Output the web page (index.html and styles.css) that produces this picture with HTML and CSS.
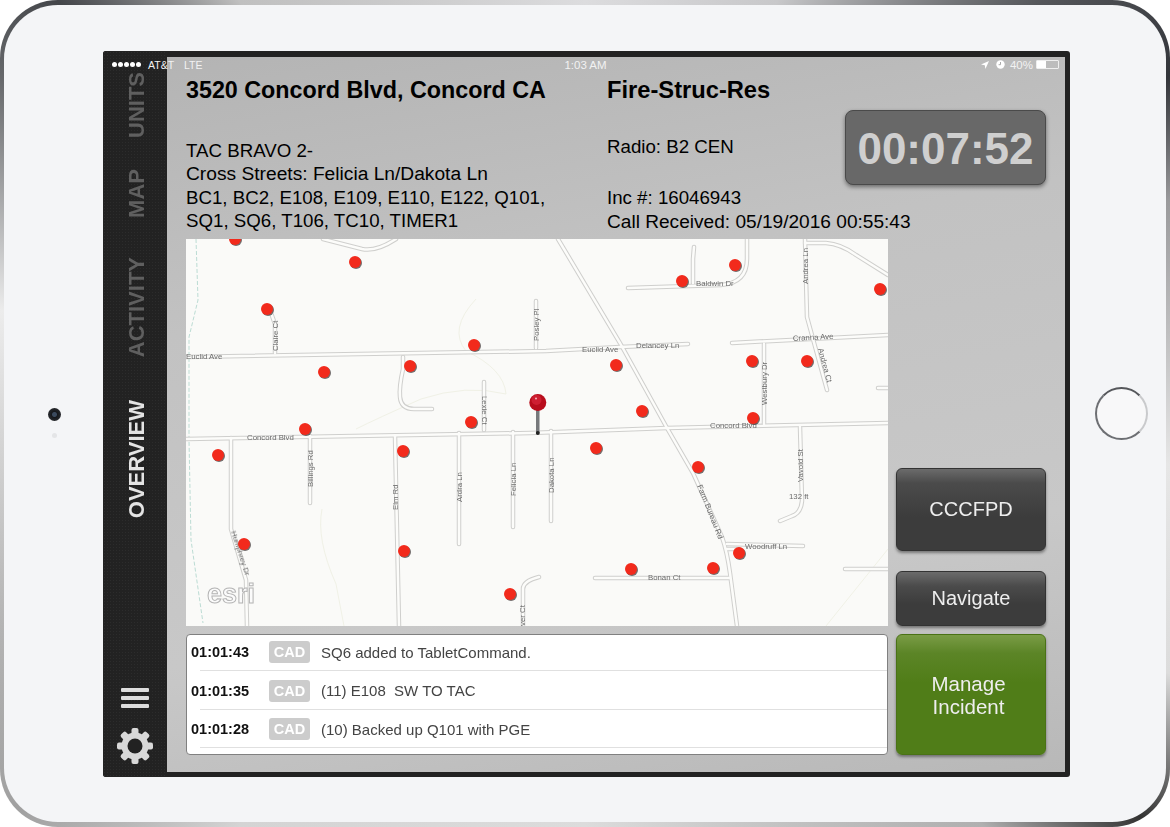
FILE: index.html
```html
<!DOCTYPE html>
<html lang="en">
<head>
  <meta charset="UTF-8">
  <title>Tablet Command</title>
  <meta name="viewport" content="width=device-width, initial-scale=1.0">
  <link rel="stylesheet" href="styles.css">
</head>
<body>
  <div class="device">
    <div class="bezel">
      <div class="bezel-left">
        <span class="camera"></span>
        <span class="sensor"></span>
      </div>

      <div class="screen">
        <nav class="sidenav">
          <a class="nav-item nav-units">UNITS</a>
          <a class="nav-item nav-map">MAP</a>
          <a class="nav-item nav-activity">ACTIVITY</a>
          <a class="nav-item nav-overview active">OVERVIEW</a>
          <div class="menu-icon"><span></span><span></span><span></span></div>
          <svg class="gear-icon" viewBox="0 0 36 36" width="36" height="36">
            <g fill="#d8d8d8">
              <rect x="14.5" y="0" width="7" height="36" rx="2"/>
              <rect x="14.5" y="0" width="7" height="36" rx="2" transform="rotate(45 18 18)"/>
              <rect x="14.5" y="0" width="7" height="36" rx="2" transform="rotate(90 18 18)"/>
              <rect x="14.5" y="0" width="7" height="36" rx="2" transform="rotate(135 18 18)"/>
            </g>
            <circle cx="18" cy="18" r="10.5" fill="none" stroke="#d8d8d8" stroke-width="6"/>
            <circle cx="18" cy="18" r="7.5" fill="#222"/>
          </svg>
        </nav>

        <main class="main">
          <div class="statusbar">
            <div class="status-left">
              <span class="signal"><i></i><i></i><i></i><i></i><i></i></span>
              <span>AT&amp;T</span>
              <span class="lte">LTE</span>
            </div>
            <div class="status-time">1:03 AM</div>
            <div class="status-right">
              <svg viewBox="0 0 8 8" width="8" height="8"><path d="M8 0 L0 3.6 L3.8 4.2 L4.4 8 Z" fill="#fff"/></svg>
              <svg class="alarm" viewBox="0 0 9 9" width="9" height="9"><circle cx="4.5" cy="4.5" r="4.2" fill="#fff"/><path d="M4.5 2 V4.7 H2.6" fill="none" stroke="#aaa" stroke-width="1"/></svg>
              <span class="pct">40%</span>
              <span class="battery"><span class="battery-level"></span></span>
            </div>
          </div>

          <header class="head">
            <div class="head-left">
              <h1>3520 Concord Blvd, Concord CA</h1>
              <p class="info">TAC BRAVO 2-<br><span class="cross">Cross Streets: Felicia Ln/Dakota Ln</span><br>BC1, BC2, E108, E109, E110, E122, Q101,<br>SQ1, SQ6, T106, TC10, TIMER1</p>
            </div>
            <div class="head-mid">
              <h1>Fire-Struc-Res</h1>
              <p class="radio">Radio: B2 CEN</p>
              <p class="inc">Inc #: 16046943<br><span class="received">Call Received: 05/19/2016 00:55:43</span></p>
            </div>
            <div class="timer">00:07:52</div>
          </header>

          <div class="body">
            <div class="map">
              <svg viewBox="0 0 702 387" width="702" height="387">
                <defs>
                  <g id="roads">
                    <path d="M0 118 L360 112 L434 108 L502 105"/>
                    <path d="M0 200 L344 194 L481 189 L702 184"/>
                    <path d="M372 0 L434 104 L481 189 L507 234 L536 298 Q541 312 544 334 L551 387"/>
                    <path d="M89 114 V85 L85 74"/>
                    <path d="M350 109 V62"/>
                    <path d="M217 118 V130 Q213 148 214 158 Q215 170 228 170 H246"/>
                    <path d="M298 191 V143"/>
                    <path d="M45 199 V290 L60 341 L61 387"/>
                    <path d="M124 197 V264"/>
                    <path d="M209 197 L213 387"/>
                    <path d="M273 194 V305"/>
                    <path d="M327 193 V288"/>
                    <path d="M365 192 V282"/>
                    <path d="M353 338 Q337 342 337 350 V387"/>
                    <path d="M137 0 L176 10 Q190 13 210 0"/>
                    <path d="M442 49 L535 46 Q561 44 561 20 V0"/>
                    <path d="M507 44 V20 L508 8"/>
                    <path d="M619 0 L621 78 L641 151"/>
                    <path d="M619 4 H640 Q655 5 670 16 L702 36"/>
                    <path d="M546 104 L702 96"/>
                    <path d="M578 105 V185"/>
                    <path d="M614 188 L616 262 Q615 274 606 277 L594 282"/>
                    <path d="M541 305 L617 307"/>
                    <path d="M541 310 H553"/>
                    <path d="M409 339 H543"/>
                    <path d="M659 330 H702"/>
                    <path d="M692 149 H702"/>
                  </g>
                </defs>

                <path class="water" d="M10 0 L12 61 L3 98 L3 201 L5 301 L17 384"/>
                <path class="contour" d="M290 60 Q262 90 280 112 Q318 130 320 155 Q280 145 235 160 Q190 180 170 190"/>
                <path class="contour" d="M136 270 Q130 300 150 345 L158 387"/>
                <path class="contour" d="M640 387 L702 310"/>

                <use href="#roads" class="road-case"/>
                <use href="#roads" class="road-fill"/>

                <g class="labels">
                  <text x="0" y="120">Euclid Ave</text>
                  <text x="61" y="201">Concord Blvd</text>
                  <text x="396" y="113">Euclid Ave</text>
                  <text x="450" y="109">Delancey Ln</text>
                  <text x="524" y="189">Concord Blvd</text>
                  <text x="510" y="47">Baldwin Dr</text>
                  <text x="607" y="102" transform="rotate(-3 607 102)">Cranna Ave</text>
                  <text x="559" y="310">Woodruff Ln</text>
                  <text x="462" y="341">Bonan Ct</text>
                  <text x="603" y="260" class="ft">132 ft</text>
                  <text transform="translate(92 112) rotate(-90)">Claire Ct</text>
                  <text transform="translate(353 102) rotate(-90)">Posley Pl</text>
                  <text transform="translate(127 248) rotate(-90)">Billings Rd</text>
                  <text transform="translate(212 271) rotate(-90)">Elm Rd</text>
                  <text transform="translate(276 263) rotate(-90)">Ardra Ln</text>
                  <text transform="translate(330 257) rotate(-90)">Felicia Ln</text>
                  <text transform="translate(368 254) rotate(-90)">Dakota Ln</text>
                  <text transform="translate(581 166) rotate(-90)">Westbury Dr</text>
                  <text transform="translate(617 243) rotate(-90)">Vavoid St</text>
                  <text transform="translate(622 45) rotate(-90)">Andrea Ln</text>
                  <text transform="translate(296 157) rotate(90)">Lexie Ct</text>
                  <text transform="translate(632 110) rotate(75)">Andrea Ct</text>
                  <text transform="translate(45 293) rotate(72)">Humphrey Dr</text>
                  <text transform="translate(511 247) rotate(68)">Farm Bureau Rd</text>
                  <text transform="translate(339 387) rotate(-90)">ver Ct</text>
                </g>

                <text class="esri" x="21" y="364">esri</text>

                <g class="dots">
                  <circle cx="49" cy="0" r="6"/>
                  <circle cx="169" cy="23" r="6"/>
                  <circle cx="81" cy="70" r="6"/>
                  <circle cx="288" cy="106" r="6"/>
                  <circle cx="224" cy="127" r="6"/>
                  <circle cx="138" cy="133" r="6"/>
                  <circle cx="285" cy="183" r="6"/>
                  <circle cx="119" cy="190" r="6"/>
                  <circle cx="32" cy="216" r="6"/>
                  <circle cx="217" cy="212" r="6"/>
                  <circle cx="58" cy="305" r="6"/>
                  <circle cx="218" cy="312" r="6"/>
                  <circle cx="324" cy="355" r="6"/>
                  <circle cx="549" cy="26" r="6"/>
                  <circle cx="496" cy="42" r="6"/>
                  <circle cx="694" cy="50" r="6"/>
                  <circle cx="430" cy="126" r="6"/>
                  <circle cx="566" cy="122" r="6"/>
                  <circle cx="621" cy="122" r="6"/>
                  <circle cx="456" cy="172" r="6"/>
                  <circle cx="567" cy="179" r="6"/>
                  <circle cx="410" cy="209" r="6"/>
                  <circle cx="512" cy="228" r="6"/>
                  <circle cx="553" cy="314" r="6"/>
                  <circle cx="445" cy="330" r="6"/>
                  <circle cx="527" cy="329" r="6"/>
                </g>

                <!-- incident pin -->
                <rect x="350" y="170" width="3.5" height="24" fill="#77797c"/>
                <circle cx="351.8" cy="194" r="2" fill="#222"/>
                <circle cx="351.8" cy="163.5" r="8.5" fill="#b80d1c"/>
                <circle cx="350.5" cy="161" r="5" fill="#d7263a" opacity="0.7"/>
                <circle cx="350" cy="159.5" r="1" fill="#f5b6bd"/>
              </svg>
            </div>

            <div class="btn-stack">
              <button class="btn btn-cccfpd">CCCFPD</button>
              <button class="btn btn-navigate">Navigate</button>
            </div>

            <div class="log">
              <div class="log-row">
                <span class="log-time">01:01:43</span>
                <span class="log-tag">CAD</span>
                <span class="log-msg">SQ6 added to TabletCommand.</span>
              </div>
              <div class="log-row">
                <span class="log-time">01:01:35</span>
                <span class="log-tag">CAD</span>
                <span class="log-msg">(11) E108&nbsp; SW TO TAC</span>
              </div>
              <div class="log-row">
                <span class="log-time">01:01:28</span>
                <span class="log-tag">CAD</span>
                <span class="log-msg">(10) Backed up Q101 with PGE</span>
              </div>
            </div>

            <button class="btn btn-manage">Manage<br>Incident</button>
          </div>
        </main>
      </div>

      <div class="bezel-right">
        <span class="home-button"></span>
      </div>
    </div>
  </div>
</body>
</html>
```

FILE: styles.css
```css
* {
  box-sizing: border-box;
}

body {
  margin: 0;
  background-color: #ffffff;
  font-family: "Liberation Sans", Arial, sans-serif;
  overflow: hidden;
}

.device {
  width: 1170px;
  height: 827px;
  padding: 5px 4px;
  border-radius: 58px;
  background: conic-gradient(#dcdcde 0deg, #c8c8ca 25deg, #54565a 48deg, #33353a 60deg, #9a9a9c 70deg, #e6e6e6 95deg, #dcdcdc 114deg, #333 126deg, #b0b0b0 136deg, #dcdcdc 180deg, #d4d4d4 220deg, #a0a0a0 235deg, #b4b4b4 250deg, #ececec 280deg, #66686b 300deg, #44464a 308deg, #c0c0c0 320deg, #dcdcde 360deg);
}

.bezel {
  display: flex;
  align-items: center;
  height: 100%;
  border-radius: 54px;
  background-color: #f4f5f7;
}

.bezel-left {
  width: 99px;
  display: flex;
  flex-direction: column;
  align-items: center;
  padding-top: 18px;
  padding-left: 1px;
}

.camera {
  width: 13px;
  height: 13px;
  border-radius: 50%;
  background: radial-gradient(circle, #3b4a5e 0 2px, #16181c 3px, #34363a 100%);
}

.sensor {
  width: 5px;
  height: 5px;
  margin-top: 12px;
  border-radius: 50%;
  background-color: #e4e5e7;
}

.bezel-right {
  width: 96px;
  display: flex;
  justify-content: center;
}

.home-button {
  width: 53px;
  height: 53px;
  margin-left: 6px;
  border-radius: 50%;
  border: 2px solid #6d6f73;
  border-right-color: #c9cacc;
  border-top-color: #55575b;
  background-color: #f8f8f9;
}

.screen {
  width: 967px;
  height: 726px;
  display: flex;
  border-radius: 3px;
  background-color: #222222;
  flex-shrink: 0;
  overflow: hidden;
}

/* side navigation */
.sidenav {
  width: 64px;
  display: flex;
  flex-direction: column;
  align-items: center;
  padding-top: 21px;
  background-color: #222222;
  background-image: radial-gradient(#2c2c2c 1px, transparent 1px);
  background-size: 3px 3px;
}

.nav-item {
  writing-mode: vertical-rl;
  transform: rotate(180deg);
  font-size: 22px;
  line-height: 20px;
  font-weight: bold;
  color: #5f5f5f;
  margin-left: 4px;
}

.nav-map {
  margin-top: 31px;
}

.nav-activity {
  margin-top: 40px;
}

.nav-overview {
  margin-top: 42px;
}

.nav-item.active {
  color: #e4e4e4;
}

.menu-icon {
  display: flex;
  flex-direction: column;
  gap: 4px;
  margin-top: auto;
}

.menu-icon span {
  display: block;
  width: 28px;
  height: 4px;
  border-radius: 1px;
  background-color: #dddddd;
}

.gear-icon {
  margin-top: 20px;
  margin-bottom: 13px;
}

/* main panel */
.main {
  position: relative;
  width: 898px;
  height: 715px;
  margin-top: 6px;
  padding-left: 19px;
  background: linear-gradient(170deg, #b4b4b4 0%, #c2c2c2 32%, #c8c8c8 70%, #b8b8b8 100%);
}

.statusbar {
  position: absolute;
  top: 1px;
  left: -55px;
  right: 6px;
  height: 14px;
  display: flex;
  justify-content: space-between;
  align-items: center;
  font-size: 10.5px;
  color: #f2f2f2;
}

.status-left,
.status-right {
  display: flex;
  align-items: center;
  width: 200px;
}

.status-right {
  justify-content: flex-end;
}

.status-time {
  font-size: 11.5px;
}

.signal {
  display: flex;
  gap: 1px;
  margin-right: 7px;
}

.signal i {
  width: 5px;
  height: 5px;
  border-radius: 50%;
  background-color: #ffffff;
}

.lte {
  margin-left: 10px;
}

.alarm {
  margin-left: 7px;
}

.pct {
  margin-left: 5px;
  font-size: 11.5px;
}

.battery {
  width: 23px;
  height: 9px;
  margin-left: 3px;
  border: 1px solid #eeeeee;
  border-radius: 1px;
}

.battery-level {
  display: block;
  width: 9px;
  height: 100%;
  background-color: #ffffff;
}

.head {
  display: flex;
  height: 182px;
  color: #000000;
}

.head h1 {
  margin: 0;
  padding-top: 19px;
  font-size: 23.3px;
  line-height: 28px;
  font-weight: bold;
}

.head p {
  margin: 0;
  font-size: 18.7px;
  line-height: 23.5px;
  white-space: nowrap;
}

.head-left {
  width: 421px;
}

.info {
  padding-top: 35px;
}

.cross {
  font-size: 19.2px;
}

.head-mid {
  width: 238px;
}

.head-mid h1 {
  font-size: 23.7px;
}

.radio {
  padding-top: 31px;
}

.inc {
  padding-top: 28px;
}

.received {
  font-size: 19.1px;
}

.timer {
  width: 201px;
  height: 75px;
  margin-top: 53px;
  border: 1px solid #4a4a4a;
  border-radius: 8px;
  background-color: #686868;
  box-shadow: 0 2px 4px rgba(0, 0, 0, 0.45);
  color: #cfcfcf;
  font-size: 44px;
  font-weight: bold;
  line-height: 75px;
  text-align: center;
}

.body {
  display: grid;
  grid-template-columns: 702px 150px;
  grid-template-rows: 387px 121px;
  gap: 8px;
}

.map {
  height: 387px;
  overflow: hidden;
  background-color: #fafaf8;
}

.map svg {
  display: block;
}

.road-case {
  fill: none;
  stroke: #cfcfcd;
  stroke-width: 4.5;
  stroke-linecap: round;
}

.road-fill {
  fill: none;
  stroke: #fcfcfa;
  stroke-width: 2.5;
  stroke-linecap: round;
}

.water {
  fill: none;
  stroke: #bcdcd4;
  stroke-width: 1;
  stroke-dasharray: 4 2;
}

.contour {
  fill: none;
  stroke: #f0f1e6;
  stroke-width: 1;
}

.labels text {
  font-size: 7.8px;
  fill: #6c6c6c;
}

.labels {
  filter: blur(0.25px);
}

.esri {
  font-size: 27px;
  font-weight: bold;
  fill: #fbfbfb;
  stroke: #b5b5b5;
  stroke-width: 1;
}

.dots circle {
  fill: #f22a1c;
  filter: drop-shadow(1px 1.5px 0.6px rgba(60, 50, 50, 0.7));
}

.btn-stack {
  display: flex;
  flex-direction: column;
  justify-content: flex-end;
  gap: 20px;
}

.btn {
  width: 150px;
  padding: 0;
  border: 1px solid #333333;
  border-radius: 6px;
  font-family: inherit;
  font-size: 20px;
  line-height: 23px;
  color: #eeeeee;
  background: linear-gradient(#6b6b6b 0, #4b4b4b 14px, #3c3c3c 60%);
  box-shadow: 0 2px 3px rgba(0, 0, 0, 0.4);
}

.btn-cccfpd {
  height: 83px;
}

.btn-navigate {
  height: 55px;
}

.btn-manage {
  height: 121px;
  padding: 2px 5px 0 0;
  border-color: #4a7216;
  font-size: 20.5px;
  background: linear-gradient(#7a9c46 0, #5c8527 18px, #507d18 40%);
}

.log {
  border: 1px solid #808080;
  border-radius: 4px;
  background-color: #ffffff;
  padding-left: 4px;
}

.log-row {
  display: flex;
  align-items: center;
  height: 38.5px;
  padding-top: 2px;
  font-size: 15px;
  border-bottom: 1px solid #e0e0e0;
  margin-left: 9px;
}

.log-row:first-child {
  margin-top: -2px;
}

.log-time {
  width: 78px;
  margin-left: -9px;
  font-size: 14.5px;
  font-weight: bold;
  color: #111111;
}

.log-tag {
  width: 41px;
  height: 22px;
  border-radius: 3px;
  background-color: #cccccc;
  color: #ffffff;
  font-size: 14.5px;
  font-weight: bold;
  line-height: 22px;
  text-align: center;
}

.log-msg {
  margin-left: 11px;
  color: #444444;
}
```
